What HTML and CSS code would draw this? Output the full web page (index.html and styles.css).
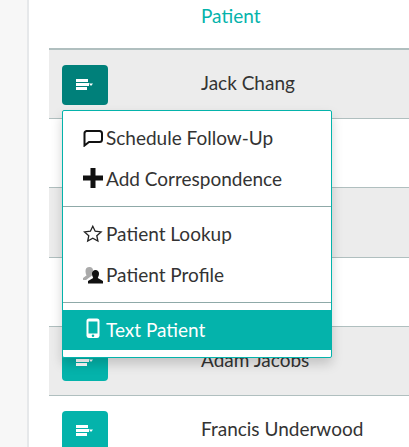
FILE: index.html
```html
<!DOCTYPE html>
<html lang="en">
<head>
    <meta charset="UTF-8">
    <meta name="viewport" content="width=device-width, initial-scale=1.0">
    <title>Patients</title>
    <link rel="stylesheet" href="styles.css">
</head>
<body>
    <svg width="0" height="0" class="defs">
        <symbol id="actions" viewBox="0 0 18 12">
            <path d="M0 0h12v3H0zM0 4h13v3H0zM0 8h11v3H0z" fill="#fff"/>
            <path d="M13 4.500h4l-2 2.500z" fill="#fff"/>
        </symbol>
    </svg>
    <div class="sidebar"></div>
    <div class="content">
        <div class="table-head">Patient</div>
        <div class="row shaded">
            <button class="action active"><svg class="action-icon"><use href="#actions"/></svg></button>
            <span class="name">Jack Chang</span>
        </div>
        <div class="row">
            <button class="action"><svg class="action-icon"><use href="#actions"/></svg></button>
        </div>
        <div class="row shaded">
            <button class="action"><svg class="action-icon"><use href="#actions"/></svg></button>
        </div>
        <div class="row">
            <button class="action"><svg class="action-icon"><use href="#actions"/></svg></button>
        </div>
        <div class="row shaded">
            <button class="action"><svg class="action-icon"><use href="#actions"/></svg></button>
            <span class="name">Adam Jacobs</span>
        </div>
        <div class="row">
            <button class="action"><svg class="action-icon"><use href="#actions"/></svg></button>
            <span class="name">Francis Underwood</span>
        </div>

        <ul class="menu">
            <li class="menu-item">
                <svg class="menu-icon" viewBox="0 0 20 20"><path d="M3.500 4h13a2.500 2.500 0 0 1 2.500 2.500v6a2.500 2.500 0 0 1-2.500 2.500H6l-4.500 3.500V6.500A2.500 2.500 0 0 1 3.500 4z" fill="none" stroke="#111" stroke-width="2"/></svg>
                Schedule Follow-Up
            </li>
            <li class="menu-item">
                <svg class="menu-icon" viewBox="0 0 20 20"><path d="M7.500 0h5v7.500H20v5h-7.500V20h-5v-7.500H0v-5h7.500z" fill="#111"/></svg>
                Add Correspondence
            </li>
            <li class="divider"></li>
            <li class="menu-item">
                <svg class="menu-icon" viewBox="0 0 20 20"><path d="M9.800 3.200l2.400 5 5.900.7-4.300 3.800 1.100 5.400-5.100-2.800-5.100 2.800 1.100-5.400-4.300-3.800 5.900-.7z" fill="none" stroke="#222" stroke-width="1.300"/></svg>
                Patient Lookup
            </li>
            <li class="menu-item">
                <svg class="menu-icon" viewBox="0 0 20 20">
                    <path d="M6.500 3a3.500 3.500 0 0 1 3.500 3.500l-1 5-6 4.500H0v-2l3.500-2.500C3 10.500 2.500 8.500 2.500 7a4 4 0 0 1 4-4z" fill="#aaa"/>
                    <path d="M12.500 6a3.500 3.500 0 0 1 3.500 4c0 1.800-1 3-1.200 4l5.200 3v2.500H5V17l5.200-3c-.2-1-1.200-2.200-1.200-4a3.500 3.500 0 0 1 3.500-4z" fill="#111"/>
                </svg>
                Patient Profile
            </li>
            <li class="divider"></li>
            <li class="menu-item selected">
                <svg class="menu-icon" viewBox="0 0 20 20"><path fill-rule="evenodd" d="M6 0.500h8a2.500 2.500 0 0 1 2.500 2.500v15a2.500 2.500 0 0 1-2.500 2H6a2.500 2.500 0 0 1-2.500-2V3A2.500 2.500 0 0 1 6 .5zM5.500 3.500v12h9v-12zm4.500 13a1.300 1.300 0 1 0 0 2.600 1.300 1.300 0 0 0 0-2.600z" fill="#fff"/></svg>
                Text Patient
            </li>
        </ul>
    </div>
</body>
</html>
```

FILE: styles.css
```css
* {
    box-sizing: border-box;
}
html, body {
    margin: 0;
    height: 447px;
    overflow: hidden;
}
body {
    display: flex;
    font-family: Lato, "Open Sans", sans-serif;
    font-size: 19px;
    color: #333;
    background-color: white;
}
.defs {
    position: absolute;
}
.sidebar {
    width: 29px;
    flex-shrink: 0;
    background-color: #f7f7f7;
    border-right: 2px solid #e6e8ea;
}
.content {
    position: relative;
    flex: 1;
    padding-left: 20px;
}
.table-head {
    height: 50px;
    padding: 4px 0 0 152px;
    line-height: 24px;
    color: #04b3ab;
    border-bottom: 2px solid #b0bfbf;
}
.row {
    display: flex;
    align-items: center;
    height: 69.2px;
    padding-left: 13px;
    border-bottom: 1px solid #b0bfbf;
}
.row.shaded {
    background-color: #ececec;
}
.action {
    display: flex;
    align-items: center;
    justify-content: center;
    width: 46px;
    height: 40px;
    padding: 0;
    margin: 1px 93px 0 0;
    background-color: #04b3ab;
    border: none;
    border-radius: 4px;
}
.action.active {
    background-color: #00807a;
}
.action-icon {
    width: 18px;
    height: 12px;
}
.name {
    color: #333;
    margin-top: -3px;
}
.menu {
    position: absolute;
    top: 110px;
    left: 33px;
    width: 270px;
    height: 248px;
    margin: 0;
    padding: 7px 0;
    list-style: none;
    background-color: white;
    border: 1px solid #04b3ab;
    border-radius: 2px;
    box-shadow: 0 6px 12px rgba(0,0,0,0.175);
}
.menu-item {
    display: flex;
    align-items: center;
    gap: 3px;
    height: 41px;
    padding: 0 0 2px 20px;
    color: #333;
}
.menu-item.selected {
    height: 40px;
    color: white;
    background-color: #04b3ab;
}
.menu-icon {
    width: 20px;
    height: 20px;
    margin-top: -2px;
    flex-shrink: 0;
}
.divider {
    height: 1px;
    margin: 6px 0 7px;
    background-color: #8fa9a8;
}
```
